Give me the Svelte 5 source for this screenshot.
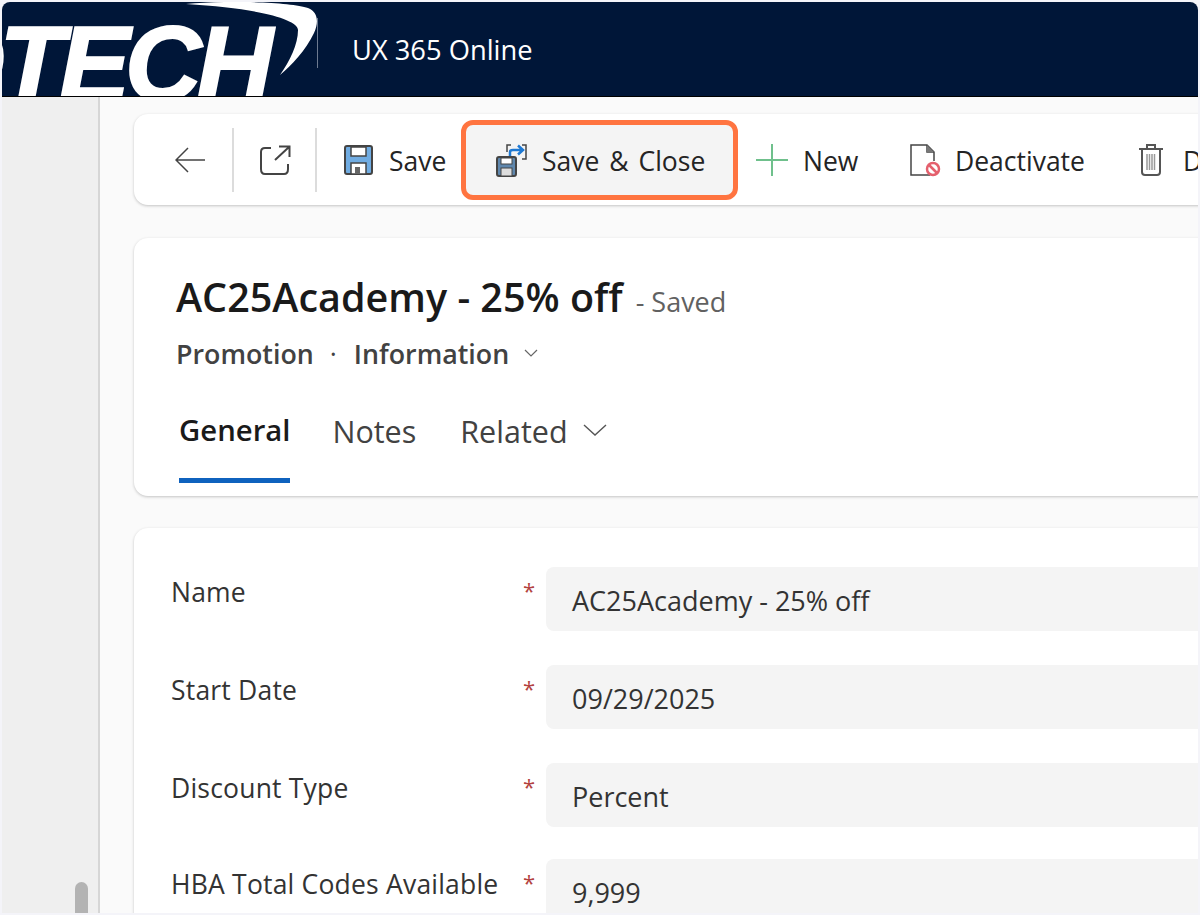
<script>
  const fields = [
    { label: 'Name', value: 'AC25Academy - 25% off' },
    { label: 'Start Date', value: '09/29/2025' },
    { label: 'Discount Type', value: 'Percent' },
    { label: 'HBA Total Codes Available', value: '9,999' }
  ];
</script>

<div class="frame">
  <header class="top">
    <div class="logo">
      <span class="logo-text">OTECH</span>
      <svg class="swoosh" width="135" height="84" viewBox="0 0 135 84" aria-hidden="true">
        <path d="M0 2 C40 -2 105 0 122 6 C132 10 133 20 128 31 C120 48 105 64 94 73 C104 59 112 42 112 28 C112 17 70 6 0 2 Z" fill="#fff" />
      </svg>
    </div>
    <div class="vline"></div>
    <div class="app-name">UX 365 Online</div>
  </header>
  <div class="body">
    <aside class="side"><div class="thumb"></div></aside>
    <main class="main">
      <div class="card bar">
        <button class="ic back">
          <svg width="30" height="28" viewBox="0 0 30 28"><path d="M30 14 H1 M13 2 L1 14 L13 26" fill="none" stroke="#444" stroke-width="1.5" /></svg>
        </button>
        <div class="sep"></div>
        <button class="ic pop">
          <svg width="32" height="32" viewBox="0 0 32 32"><path d="M12 4 H6 Q2 4 2 8 V25 Q2 30 6 30 H25 Q29 30 29 25 V20 M16 16 L30 3 M20 2.500 H30.500 V13" fill="none" stroke="#444" stroke-width="2" /></svg>
        </button>
        <div class="sep"></div>
        <button class="cmd save">
          <svg width="30" height="30" viewBox="0 0 30 30"><rect x="1" y="1" width="27" height="28" rx="2" fill="#70ace2" stroke="#444" stroke-width="2" /><rect x="7" y="2" width="15" height="9" fill="#fff" stroke="#444" stroke-width="1.500" /><rect x="7" y="18" width="15" height="11" fill="#fff" stroke="#444" stroke-width="1.500" /><rect x="11" y="22" width="5" height="7" fill="#666" /></svg>
          <span>Save</span>
        </button>
        <button class="cmd close">
          <svg width="32" height="34" viewBox="0 0 32 34"><rect x="1" y="14" width="19" height="19" rx="2" fill="#5f87ad" stroke="#444" stroke-width="2" /><rect x="5" y="15" width="11" height="6" fill="#fff" stroke="#444" /><rect x="5" y="25" width="11" height="8" fill="#ddd" stroke="#444" /><path d="M11 9 V2 H15 M26 2 H30 V16 H26" fill="none" stroke="#444" stroke-width="1.500" /><path d="M14 13 V9 Q14 7 17 7 H27 M22 2.500 L27 7 L22 11.500" fill="none" stroke="#1e78d2" stroke-width="2.500" /></svg>
          <span>Save &amp; Close</span>
        </button>
        <button class="cmd new">
          <svg width="34" height="34" viewBox="0 0 34 34"><path d="M17 1 V33 M1 17 H33" stroke="#6fc08c" stroke-width="2" /></svg>
          <span>New</span>
        </button>
        <button class="cmd deact">
          <svg width="32" height="34" viewBox="0 0 32 34"><path d="M21 32 H2 V2 H18 L25 9 V18 M18 2 V9 H25" fill="none" stroke="#444" stroke-width="1.500" /><path d="M18 2 V9 H25 Z" fill="#777" /><circle cx="24" cy="26" r="6" fill="#fff" stroke="#e4606d" stroke-width="2.500" /><path d="M20 22 L28 30" stroke="#e4606d" stroke-width="2.500" /></svg>
          <span>Deactivate</span>
        </button>
        <button class="cmd del">
          <svg width="26" height="34" viewBox="0 0 26 34"><path d="M1 6 H25 M9 6 V2 H17 V6 M4 6 V29 Q4 32 7 32 H19 Q22 32 22 29 V6" fill="none" stroke="#555" stroke-width="2" /><path d="M9 11 V27 M11.500 11 V27 M14 11 V27 M16.500 11 V27" stroke="#999" stroke-width="1.500" /></svg>
          <span>Delete</span>
        </button>
      </div>

      <div class="card head">
        <div class="title-row"><h1>AC25Academy - 25% off</h1><span class="saved">- Saved</span></div>
        <div class="crumb">
          <span>Promotion</span><span class="dot">·</span><span>Information</span>
          <svg width="14" height="14" viewBox="0 0 14 14"><path d="M1 4 L7 10 L13 4" fill="none" stroke="#666" stroke-width="1.200" /></svg>
        </div>
        <div class="tabs">
          <div class="tab active">General</div>
          <div class="tab">Notes</div>
          <div class="tab">Related
            <svg width="24" height="14" viewBox="0 0 24 14"><path d="M1 2 L12 12 L23 2" fill="none" stroke="#555" stroke-width="1.400" /></svg>
          </div>
        </div>
      </div>

      <div class="card form">
        {#each fields as f}
          <div class="row">
            <div class="lab">{f.label}</div>
            <div class="req">*</div>
            <div class="val">{f.value}</div>
          </div>
        {/each}
      </div>
    </main>
  </div>
</div>

<style>
  :global(body) { background: #f4f4f9; overflow: hidden; }
  .frame { margin: 2px; width: 1196px; height: 911px; border-radius: 8px 8px 0 0; overflow: hidden; display: flex; flex-direction: column; font-family: "Open Sans", "Noto Sans", sans-serif; color: #242424; background: #fafafa; }
  .top { height: 94px; flex: none; background: #001638; border-bottom: 1px solid #000; display: flex; align-items: center; overflow: hidden; }
  .logo { width: 315px; height: 94px; position: relative; overflow: hidden; flex: none; }
  .logo-text { position: absolute; left: -80px; top: 4px; font: italic 700 106px/114px "Liberation Sans", sans-serif; color: #fff; letter-spacing: -5px; -webkit-text-stroke: 2px #fff; white-space: nowrap; }
  .swoosh { position: absolute; left: 184px; top: 0; }
  .vline { width: 1px; height: 50px; background: #6d7a90; align-self: flex-start; margin-top: 16px; flex: none; }
  .app-name { margin-left: 34px; color: #fff; font-size: 27.3px; }
  .body { flex: 1; display: flex; min-height: 0; }
  .side { width: 98px; flex: none; background: #efefef; border-right: 2px solid #d6d6d6; box-sizing: border-box; position: relative; }
  .thumb { position: absolute; left: 73px; top: 785px; width: 13px; height: 40px; border-radius: 7px; background: #b3b3b3; }
  .main { flex: 1; padding: 17px 0 0 34px; min-width: 0; overflow: hidden; }
  .card { width: 1100px; background: #fff; border-radius: 14px; box-shadow: 0 1px 3px rgba(0,0,0,.22); box-sizing: border-box; }
  .bar { height: 91px; display: flex; align-items: center; white-space: nowrap; }
  button { font: inherit; color: inherit; background: none; border: 0; padding: 0; display: flex; align-items: center; flex: none; }
  .ic { justify-content: center; }
  .back { width: 98px; padding-left: 41px; box-sizing: border-box; justify-content: flex-start; }
  .pop { width: 81px; }
  .sep { width: 2px; height: 64px; background: #dcdcdc; flex: none; }
  .cmd { font-size: 26.5px; }
  .cmd svg { flex: none; }
  .cmd span { padding-top: 2px; }
  .save { width: 144px; padding-left: 27px; box-sizing: border-box; gap: 15px; }
  .close { width: 277px; height: 80px; border: 5px solid #ff7440; border-radius: 12px; background: #f4f4f4; box-sizing: border-box; padding-left: 30px; gap: 14px; word-spacing: 3px; }
  .new { width: 171px; padding-left: 17px; box-sizing: border-box; gap: 14px; }
  .deact { width: 229px; box-sizing: border-box; gap: 14px; }
  .del { gap: 19px; }
  .head { margin-top: 33px; height: 258px; padding: 34px 0 0 42px; position: relative; }
  .title-row { display: flex; align-items: baseline; gap: 13px; }
  h1 { margin: 0; font-size: 39.5px; font-weight: 600; line-height: 50px; color: #1a1a1a; }
  .saved { font-size: 27px; color: #616161; }
  .crumb { display: flex; align-items: center; font-size: 26.8px; font-weight: 600; color: #424242; margin-top: 14px; height: 34px; }
  .dot { margin: 0 17px 0 16px; font-weight: 400; }
  .crumb svg { margin-left: 15px; }
  .tabs { display: flex; gap: 42px; margin-top: 33px; font-size: 30.5px; color: #424242; }
  .tab { height: 80px; display: flex; align-items: flex-start; padding-top: 7px; box-sizing: border-box; gap: 15px; }
  .tab:last-child { margin-left: 2px; }
  .tab svg { margin-top: 13px; }
  .active { font-size: 29.3px; font-weight: 600; color: #1a1a1a; border-bottom: 5px solid #0f62be; margin-left: 3px; }
  .form { margin-top: 32px; height: 420px; padding: 39px 0 0 37px; display: flex; flex-direction: column; gap: 34px; }
  .row { display: flex; height: 64px; }
  .row:last-child { margin-top: -2px; }
  .lab { width: 352px; flex: none; font-size: 26.5px; letter-spacing: 0.2px; color: #333; line-height: 50px; height: 50px; white-space: nowrap; }
  .req { width: 23px; flex: none; font-size: 22px; color: #b3423f; line-height: 46px; height: 50px; }
  .val { flex: 1; background: #f4f4f4; border-radius: 8px; padding-left: 26px; font-size: 27px; line-height: 67px; color: #333; }
</style>
